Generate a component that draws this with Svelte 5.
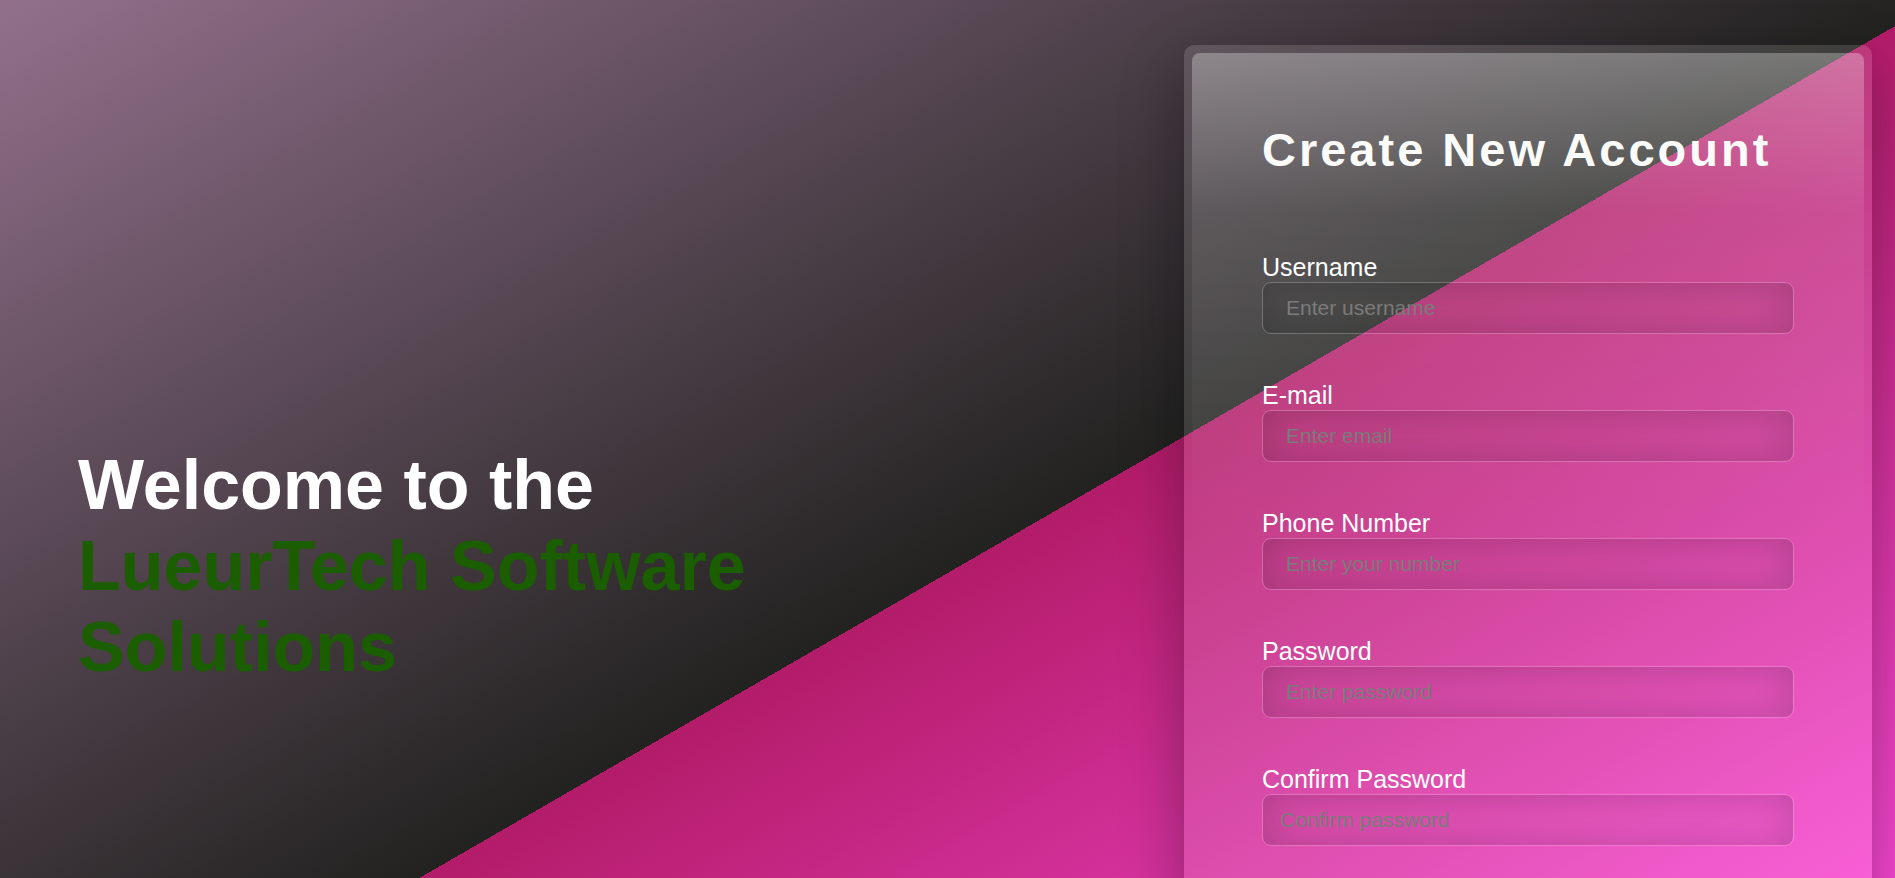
<script>
  const fields = [
    { id: 'username', label: 'Username', type: 'text', hint: 'Enter username' },
    { id: 'email', label: 'E-mail', type: 'email', hint: 'Enter email' },
    { id: 'phone', label: 'Phone Number', type: 'tel', hint: 'Enter your number' },
    { id: 'password', label: 'Password', type: 'password', hint: 'Enter password' },
    { id: 'confirm', label: 'Confirm Password', type: 'password', hint: 'Confirm password', tight: true }
  ];
</script>

<main class="page">
  <h1 class="welcome">Welcome to the <span>LueurTech Software Solutions</span></h1>
  <div class="card">
    <form class="panel">
      <h2>Create New Account</h2>
      {#each fields as field}
        <div class="field">
          <label for={field.id}>{field.label}</label>
          <input id={field.id} type={field.type} placeholder={field.hint} class:tight={field.tight} />
        </div>
      {/each}
    </form>
  </div>
</main>

<style>
  :global(body) {
    margin: 0;
    background: #222;
  }

  .page {
    box-sizing: border-box;
    display: flex;
    justify-content: space-between;
    align-items: flex-start;
    height: 100vh;
    overflow: hidden;
    padding: 45px 23px 0 78px;
    font-family: Arial, 'Liberation Sans', sans-serif;
    color: #fff;
    background: linear-gradient(150deg, #92708c 0%, #222220 56.8%, #b31c69 56.8%, #f848d2 100%);
  }

  .welcome {
    flex: 0 1 700px;
    margin: 400px 0 0;
    font-size: 70px;
    line-height: 81px;
    font-weight: 700;
  }

  .welcome span {
    display: block;
    color: #1a5e00;
  }

  .card {
    box-sizing: border-box;
    flex: 0 1 688px;
    min-height: 100vh;
    display: flex;
    padding: 8px;
    border-radius: 10px;
    background: rgba(255, 255, 255, 0.13);
    box-shadow: 0 24px 60px rgba(8, 7, 16, 0.36);
  }

  .panel {
    flex: 1;
    padding: 70px;
    border-radius: 8px;
    background: linear-gradient(rgba(255, 255, 255, 0.29), rgba(255, 255, 255, 0.08) 160px, rgba(255, 255, 255, 0) 500px);
  }

  h2 {
    margin: 0 0 77px;
    font-size: 47px;
    line-height: 54px;
    font-weight: 700;
    letter-spacing: 3px;
    color: #fbfbf9;
    white-space: nowrap;
  }

  .field {
    display: flex;
    flex-direction: column;
    margin-bottom: 48px;
  }

  label {
    padding-bottom: 2px;
    font-size: 25px;
    line-height: 26px;
  }

  input {
    box-sizing: border-box;
    width: 100%;
    height: 52px;
    padding: 0 23px;
    border: 1px solid rgba(255, 255, 255, 0.22);
    border-radius: 9px;
    outline: none;
    background: transparent;
    box-shadow: inset 0 0 40px rgba(8, 7, 16, 0.22);
    font: 21px Arial, 'Liberation Sans', sans-serif;
    color: #fff;
  }

  input.tight {
    padding: 0 17px;
  }

  input::placeholder {
    color: #7b7b7b;
    opacity: 1;
  }
</style>
